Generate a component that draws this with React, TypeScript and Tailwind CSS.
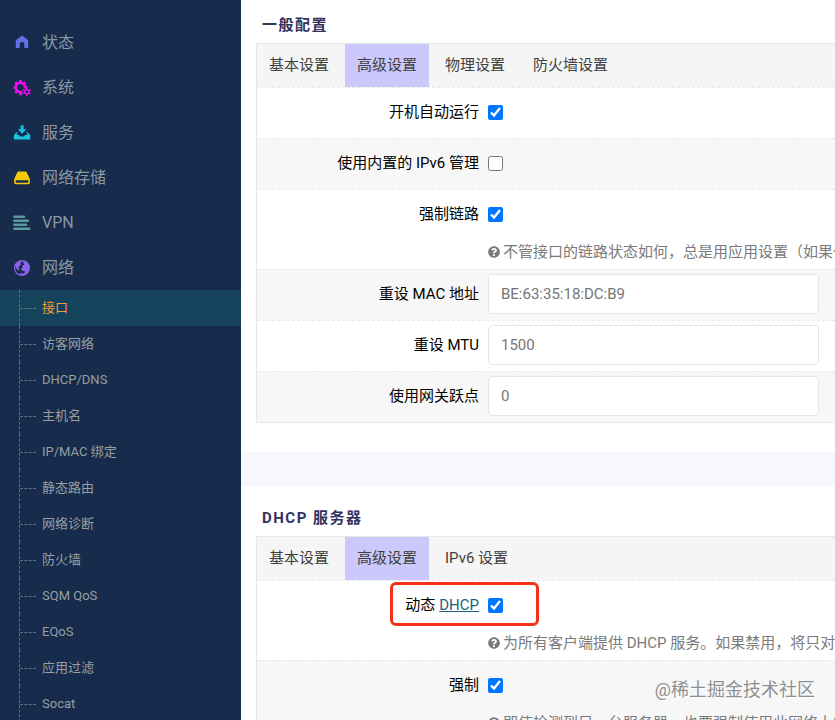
import { useState } from 'react'
import type { ReactNode } from 'react'
import { FaQuestionCircle } from 'react-icons/fa'

const FONT = "font-[Roboto,'Noto_Sans_CJK_SC',sans-serif]"

function HomeIcon() {
  return (
    <svg viewBox="0 0 18 18" className="size-[18px]" fill="#6370e5">
      <path d="M9 1.6 14.3 5.4Q15.2 6.1 15.2 7.2V14H11.3V10.2Q11.3 8 9 8T6.7 10.2V14H2.8V7.2Q2.8 6.1 3.7 5.4Z" />
    </svg>
  )
}

function CogsIcon() {
  return (
    <svg viewBox="0 0 18 18" className="size-[18px]" fill="none" stroke="#f40df0">
      <path strokeWidth="2.2" d="M9.4 12.6A4.6 4.6 0 1 1 12 8.2" />
      <path
        strokeWidth="2.8"
        d="M7.4 4.2V1M10.4 5.4 12.5 3.2M4.4 5.4 2.2 3.4M3.2 8.6H.6M4.4 11.4 2.4 13.8M7.6 12.8V16.2M11.4 8.2H14.2"
      />
      <circle cx="13.8" cy="12.8" r="2.1" strokeWidth="1.2" />
      <path
        strokeWidth="1.5"
        d="M13.8 10.7V8.8M13.8 14.9V17M15.6 11.8 17.6 10.7M11.9 13.9 10 14.9M15.6 13.9 17.6 14.9M11.9 11.8 10 10.7"
      />
    </svg>
  )
}

function DownloadIcon() {
  return (
    <svg viewBox="0 0 18 18" className="size-[18px]" fill="#16c4e4">
      <path d="M7.6 1.2H10.6V5.2H13.4L9.1 9.8 4.8 5.2H7.6Z" />
      <path d="M3.2 8.4H5.2L3.4 11H6.1L7.1 12.6H11L12 11H14.8L13 8.4H15L17.3 11.4V14.4Q17.3 15.4 16.3 15.4H1.8Q.8 15.4 .8 14.4V11.4Z" />
    </svg>
  )
}

function DriveIcon() {
  return (
    <svg viewBox="0 0 18 18" className="size-[18px]" fill="#f7c80a">
      <path d="M4.2 3.4Q4.6 2.6 5.5 2.6H12.5Q13.4 2.6 13.8 3.4L16.6 9.4Q16.9 10.2 16.9 11V13.4Q16.9 15.2 15.1 15.2H2.9Q1.1 15.2 1.1 13.4V11Q1.1 10.2 1.4 9.4ZM2.7 11.2V13Q2.7 13.7 3.4 13.7H14.6Q15.3 13.7 15.3 13V11.2Z" fillRule="evenodd" />
    </svg>
  )
}

function BarsIcon() {
  return (
    <svg viewBox="0 0 18 18" className="size-[18px]" stroke="#5a9a9f" strokeWidth="2.5" strokeLinecap="round">
      <path d="M1.4 2.8H11M1.4 6.8H14.8M1.4 10.8H13M1.4 14.8H16.2" />
    </svg>
  )
}

function GlobeIcon() {
  return (
    <svg viewBox="0 0 18 18" className="size-[18px]" fill="#8964e8">
      <circle cx="9" cy="9" r="7.4" fill="none" stroke="#8964e8" strokeWidth="1.2" />
      <path d="M2.4 5.2 4.3 3.2 7.8 2.1 8.6 3.2 7.4 4.2 8.3 5.5 6.7 6.6 6.5 7.6 5.1 8.4 6.4 9.6 6.2 10.8 4.8 11.2 3.4 9.4 2.8 7.4Z" />
      <path d="M9.6 2 14.2 3.4 16.2 6.8 16.5 9.8 15 13.3 12.6 15.6 9 16.6 6 15.6 7.2 14.2 9.8 14.6 12 13.4 11.6 12 8.6 11.8 8.2 9.6 9.6 8.2 9.4 6.6 11.4 5.8 10.6 4.4Z" />
    </svg>
  )
}

const menu = [
  { label: '状态', icon: <HomeIcon /> },
  { label: '系统', icon: <CogsIcon /> },
  { label: '服务', icon: <DownloadIcon /> },
  { label: '网络存储', icon: <DriveIcon /> },
  { label: 'VPN', icon: <BarsIcon /> },
  { label: '网络', icon: <GlobeIcon /> },
]

const subMenu = [
  '接口',
  '访客网络',
  'DHCP/DNS',
  '主机名',
  'IP/MAC 绑定',
  '静态路由',
  '网络诊断',
  '防火墙',
  'SQM QoS',
  'EQoS',
  '应用过滤',
  'Socat',
]

function Sidebar() {
  const [current, setCurrent] = useState('接口')

  return (
    <nav className="w-[241px] shrink-0 overflow-hidden bg-[#172b4d] pt-5">
      <ul>
        {menu.map(item => (
          <li key={item.label}>
            <a href="#" className="flex h-[45px] items-center gap-[11px] pl-[13px] text-base text-[#8b99a3]">
              {item.icon}
              {item.label}
            </a>
          </li>
        ))}
      </ul>
      <ul>
        {subMenu.map(label => (
          <li key={label}>
            <a
              href="#"
              onClick={() => setCurrent(label)}
              className={`flex h-9 items-center text-[13px] ${
                current === label ? 'bg-[#16435c] text-[#fb9d36]' : 'text-[#979f9f]'
              }`}
            >
              <span className="ml-[19px] mr-1.5 flex h-full w-[17px] items-center border-l border-dashed border-[#5f7186]">
                <span className="w-full border-t border-dashed border-[#5f7186]" />
              </span>
              {label}
            </a>
          </li>
        ))}
      </ul>
    </nav>
  )
}

function Tabs({ items }: { items: string[] }) {
  const [active, setActive] = useState(items[1])

  return (
    <div className="flex gap-1 bg-[#f5f5f5]" role="tablist">
      {items.map(item => (
        <button
          key={item}
          type="button"
          role="tab"
          aria-selected={active === item}
          onClick={() => setActive(item)}
          className={`h-[43px] shrink-0 px-3 text-[15px] text-[#404040] ${active === item ? 'bg-[#cbc8fc]' : ''}`}
        >
          {item}
        </button>
      ))}
    </div>
  )
}

interface RowProps {
  id: string
  label: ReactNode
  help?: string
  children: ReactNode
}

function Row({ id, label, help, children }: RowProps) {
  return (
    <div className="flex gap-[9px] border-t border-dashed border-[#e9e9e9] bg-white text-[15px] even:bg-[#f7f7f7]">
      <label htmlFor={id} className="flex h-12 w-[222px] shrink-0 items-center justify-end gap-1 text-black">
        {label}
      </label>
      <div className="min-w-0 flex-1">
        <div className="mb-0.5 flex h-12 items-center">{children}</div>
        {help && (
          <p className="mb-[5px] flex h-6 items-center gap-[3px] whitespace-nowrap text-[#7a7a7a]">
            <FaQuestionCircle className="size-3 shrink-0" />
            {help}
          </p>
        )}
      </div>
    </div>
  )
}

function Check({ id, checked = false }: { id: string; checked?: boolean }) {
  return <input id={id} type="checkbox" defaultChecked={checked} className="size-[15px] accent-[#0075ff]" />
}

function TextBox({ id, placeholder }: { id: string; placeholder: string }) {
  return (
    <input
      id={id}
      type="text"
      placeholder={placeholder}
      className="h-10 w-[331px] rounded border border-[#e4e7e9] bg-white px-3 text-[15px] text-[#555] placeholder:text-[#757575]"
    />
  )
}

function GeneralSection() {
  return (
    <section className="bg-white pb-[29px] pl-[15px] pt-[15px]">
      <h3 className="mb-2 pl-1.5 text-[15px] font-bold leading-5 tracking-widest text-[#32325d]">一般配置</h3>
      <div className="border-y border-l border-[#e6e6e6]">
        <Tabs items={['基本设置', '高级设置', '物理设置', '防火墙设置']} />
        <div>
          <Row id="auto" label="开机自动运行">
            <Check id="auto" checked />
          </Row>
          <Row id="ipv6" label="使用内置的 IPv6 管理">
            <Check id="ipv6" />
          </Row>
          <Row
            id="link"
            label="强制链路"
            help="不管接口的链路状态如何，总是用应用设置（如果勾选，链路状态变更将不再触发 hotplug 事件处理）。"
          >
            <Check id="link" checked />
          </Row>
          <Row id="mac" label="重设 MAC 地址">
            <TextBox id="mac" placeholder="BE:63:35:18:DC:B9" />
          </Row>
          <Row id="mtu" label="重设 MTU">
            <TextBox id="mtu" placeholder="1500" />
          </Row>
          <Row id="metric" label="使用网关跃点">
            <TextBox id="metric" placeholder="0" />
          </Row>
        </div>
      </div>
    </section>
  )
}

function DhcpSection() {
  return (
    <section className="mt-[34px] bg-white pl-[15px] pt-[22px]">
      <h3 className="mb-2 pl-1.5 text-[15px] font-bold leading-5 tracking-widest text-[#32325d]">DHCP 服务器</h3>
      <div className="border-y border-l border-[#e6e6e6]">
        <Tabs items={['基本设置', '高级设置', 'IPv6 设置']} />
        <div className="relative">
          <Row
            id="dynamic"
            label={
              <>
                动态
                <a href="#" className="text-[#1c5f7c] underline">DHCP</a>
              </>
            }
            help="为所有客户端提供 DHCP 服务。如果禁用，将只对具有静态租约的客户端提供服务。"
          >
            <Check id="dynamic" checked />
          </Row>
          <Row id="force" label="强制" help="即使检测到另一台服务器，也要强制使用此网络上的 DHCP。">
            <Check id="force" checked />
          </Row>
          {/* highlight around the dynamic DHCP switch */}
          <div className="pointer-events-none absolute left-[133px] top-0.5 h-11 w-[149px] rounded-md border-3 border-[#f4301a]" />
        </div>
      </div>
    </section>
  )
}

export default function App() {
  return (
    <div className={`relative flex h-screen overflow-hidden bg-[#f7f8fd] ${FONT}`}>
      <Sidebar />
      <main className="min-w-0 flex-1 overflow-hidden">
        <GeneralSection />
        <DhcpSection />
      </main>
      <span className="pointer-events-none absolute bottom-[18px] right-5 text-lg leading-6 text-[#8f8f8f] [text-shadow:1px_1px_1px_white]">
        @稀土掘金技术社区
      </span>
    </div>
  )
}
